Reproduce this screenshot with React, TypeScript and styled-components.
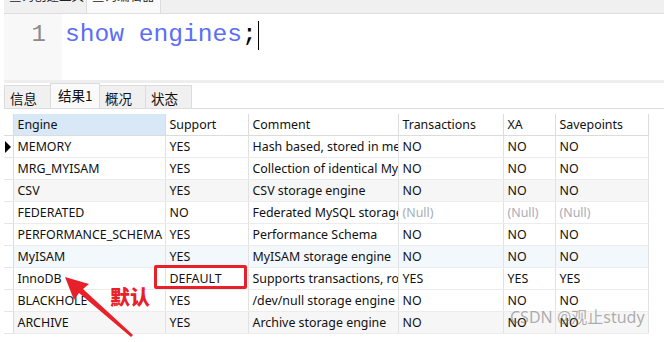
import styled, { createGlobalStyle } from "styled-components";

const GlobalStyle = createGlobalStyle`
  html, body {
    margin: 0;
    padding: 0;
    background: #ffffff;
  }
  body {
    width: 664px;
    height: 342px;
    overflow: hidden;
    font-family: "Noto Sans", "Noto Sans CJK SC", sans-serif;
  }
`;

type Tone = "plain" | "gray" | "blue";

type Row = {
  engine: string;
  support: string;
  comment: string;
  tx: string | null;
  xa: string | null;
  sp: string | null;
  tone: Tone;
};

const rows: Row[] = [
  { engine: "MEMORY", support: "YES", comment: "Hash based, stored in memory, useful for temporary tables", tx: "NO", xa: "NO", sp: "NO", tone: "plain" },
  { engine: "MRG_MYISAM", support: "YES", comment: "Collection of identical MyISAM tables", tx: "NO", xa: "NO", sp: "NO", tone: "plain" },
  { engine: "CSV", support: "YES", comment: "CSV storage engine", tx: "NO", xa: "NO", sp: "NO", tone: "gray" },
  { engine: "FEDERATED", support: "NO", comment: "Federated MySQL storage engine", tx: null, xa: null, sp: null, tone: "plain" },
  { engine: "PERFORMANCE_SCHEMA", support: "YES", comment: "Performance Schema", tx: "NO", xa: "NO", sp: "NO", tone: "plain" },
  { engine: "MyISAM", support: "YES", comment: "MyISAM storage engine", tx: "NO", xa: "NO", sp: "NO", tone: "blue" },
  { engine: "InnoDB", support: "DEFAULT", comment: "Supports transactions, row-level locking, and foreign keys", tx: "YES", xa: "YES", sp: "YES", tone: "plain" },
  { engine: "BLACKHOLE", support: "YES", comment: "/dev/null storage engine (anything you write to it disappears)", tx: "NO", xa: "NO", sp: "NO", tone: "plain" },
  { engine: "ARCHIVE", support: "YES", comment: "Archive storage engine", tx: "NO", xa: "NO", sp: "NO", tone: "gray" },
];

const columns = [
  { key: "engine", label: "Engine", width: 152 },
  { key: "support", label: "Support", width: 83 },
  { key: "comment", label: "Comment", width: 150 },
  { key: "tx", label: "Transactions", width: 105 },
  { key: "xa", label: "XA", width: 52 },
  { key: "sp", label: "Savepoints", width: 93 },
] as const;

const toneColor: Record<Tone, string> = {
  plain: "#ffffff",
  gray: "#f6f6f6",
  blue: "#f3f8fd",
};

export default function App() {
  return (
    <>
      <GlobalStyle />
      <Page>
        <TopStrip>
          <TopTab>查询创建工具</TopTab>
          <TopTab $active>查询编辑器</TopTab>
        </TopStrip>

        <Editor>
          <Gutter>1</Gutter>
          <Code>
            <Keyword>show engines</Keyword>
            <Semi>;</Semi>
            <Caret />
          </Code>
        </Editor>

        <Splitter />

        <TabBar>
          <ResultTab>信息</ResultTab>
          <ResultTab $active>结果1</ResultTab>
          <ResultTab>概况</ResultTab>
          <ResultTab>状态</ResultTab>
        </TabBar>

        <Grid>
          <Table>
            <colgroup>
              <col style={{ width: 9 }} />
              {columns.map((c) => (
                <col key={c.key} style={{ width: c.width }} />
              ))}
            </colgroup>
            <thead>
              <tr>
                <HeadCell />
                {columns.map((c) => (
                  <HeadCell key={c.key} $selected={c.key === "engine"}>
                    {c.label}
                  </HeadCell>
                ))}
              </tr>
            </thead>
            <tbody>
              {rows.map((r, i) => (
                <BodyRow key={r.engine} $tone={r.tone}>
                  <Pointer>{i === 0 ? <Triangle /> : null}</Pointer>
                  <Cell>{r.engine}</Cell>
                  <Cell>{r.support}</Cell>
                  <Cell>{r.comment}</Cell>
                  <Cell $null={r.tx === null}>{r.tx ?? "(Null)"}</Cell>
                  <Cell $null={r.xa === null}>{r.xa ?? "(Null)"}</Cell>
                  <Cell $null={r.sp === null}>{r.sp ?? "(Null)"}</Cell>
                </BodyRow>
              ))}
            </tbody>
          </Table>

          <Annotation>
            <HighlightBox />
            <Arrow viewBox="0 0 664 342" width="664" height="342">
              <polygon
                points="65,277 89,284 83,289 133,335 131,337 79,293 74,300"
                fill="#e8202a"
              />
            </Arrow>
            <Label>默认</Label>
            <Watermark>CSDN @观止study</Watermark>
          </Annotation>
        </Grid>
      </Page>
    </>
  );
}

const Page = styled.div`
  display: flex;
  flex-direction: column;
  width: 664px;
  height: 342px;
  padding-left: 4px;
  box-sizing: border-box;
`;

const TopStrip = styled.div`
  display: flex;
  height: 13px;
  background: #f0f0f0;
  border-bottom: 1px solid #dedede;
  overflow: hidden;
`;

const TopTab = styled.div<{ $active?: boolean }>`
  width: ${({ $active }) => ($active ? 74 : 83)}px;
  box-sizing: border-box;
  padding-left: 5px;
  margin-top: -14px;
  height: 27px;
  font-family: "Noto Sans CJK SC", sans-serif;
  font-size: 12.5px;
  line-height: 19px;
  white-space: nowrap;
  overflow: hidden;
  color: #222;
  background: ${({ $active }) => ($active ? "#fafafa" : "#f0f0f0")};
  border-right: 1px solid #dcdcdc;
`;

const Editor = styled.div`
  display: flex;
  height: 66px;
  background: #ffffff;
`;

const Gutter = styled.div`
  width: 58px;
  box-sizing: border-box;
  background: #f8f8f8;
  padding: 5px 16px 0 0;
  text-align: right;
  font-family: "Liberation Mono", monospace;
  font-size: 24px;
  line-height: 32px;
  color: #8c8c8c;
`;

const Code = styled.div`
  display: flex;
  align-items: flex-start;
  padding: 5px 0 0 3px;
  font-family: "Liberation Mono", monospace;
  font-size: 24.6px;
  line-height: 32px;
`;

const Keyword = styled.span`
  color: #5c6ef6;
  white-space: pre;
`;

const Semi = styled.span`
  color: #000000;
`;

const Caret = styled.span`
  display: block;
  width: 1px;
  height: 29px;
  margin: 2px 0 0 1px;
  background: #000000;
`;

const Splitter = styled.div`
  height: 3px;
  background: #eeeeee;
`;

const TabBar = styled.div`
  display: flex;
  align-items: flex-end;
  height: 25px;
  border-bottom: 1px solid #dcdcdc;
  margin-bottom: 5px;
`;

const ResultTab = styled.div<{ $active?: boolean }>`
  box-sizing: border-box;
  width: ${({ $active }) => ($active ? 50 : 47)}px;
  height: ${({ $active }) => ($active ? 25 : 23)}px;
  padding-left: ${({ $active }) => ($active ? 7 : 5)}px;
  font-family: "Noto Sans CJK SC", sans-serif;
  font-size: 13.5px;
  line-height: ${({ $active }) => ($active ? 22 : 24)}px;
  color: #111;
  background: ${({ $active }) => ($active ? "#fafafa" : "#f0f0f0")};
  border: 1px solid #dcdcdc;
  border-bottom: none;
  margin-right: -1px;
`;

const Grid = styled.div`
  position: relative;
  flex: 1;
`;

const Table = styled.table`
  table-layout: fixed;
  border-collapse: collapse;
  width: 644px;
  font-size: 12.4px;
  color: #111;
`;

const HeadCell = styled.th<{ $selected?: boolean }>`
  height: 21px;
  padding: 0 0 0 4px;
  text-align: left;
  font-weight: normal;
  white-space: nowrap;
  overflow: hidden;
  background: ${({ $selected }) => ($selected ? "#d9e8f7" : "#ffffff")};
  border-right: 1px solid #dcdcdc;
  border-bottom: 1px solid #dcdcdc;
  &:first-child {
    padding: 0;
  }
`;

const BodyRow = styled.tr<{ $tone: Tone }>`
  background: ${({ $tone }) => toneColor[$tone]};
`;

const Cell = styled.td<{ $null?: boolean }>`
  height: 21px;
  padding: 0 0 0 4px;
  white-space: nowrap;
  overflow: hidden;
  text-overflow: clip;
  color: ${({ $null }) => ($null ? "#a9acb8" : "#111111")};
  border-right: 1px solid #e2e2e2;
  border-bottom: 1px solid #ececec;
`;

const Pointer = styled.td`
  padding: 0;
  background: #ffffff;
  border-right: 1px solid #dcdcdc;
  border-bottom: 1px solid #e6e6e6;
  vertical-align: middle;
`;

const Triangle = styled.span`
  display: block;
  width: 0;
  height: 0;
  margin-left: 1px;
  border-top: 6px solid transparent;
  border-bottom: 6px solid transparent;
  border-left: 6px solid #000000;
`;

const Annotation = styled.div`
  position: absolute;
  inset: 0;
  pointer-events: none;
`;

const HighlightBox = styled.div`
  position: absolute;
  left: 150px;
  top: 151px;
  width: 93px;
  height: 24px;
  box-sizing: border-box;
  border: 3px solid #e8202a;
  border-radius: 2px;
`;

const Arrow = styled.svg`
  position: absolute;
  left: -4px;
  top: -114px;
`;

const Label = styled.span`
  position: absolute;
  left: 106px;
  top: 170px;
  font-family: "Noto Sans CJK SC", sans-serif;
  font-size: 20px;
  font-weight: 900;
  line-height: 26px;
  color: #e8202a;
`;

const Watermark = styled.span`
  position: absolute;
  left: 506px;
  top: 191px;
  font-family: "Noto Sans", "Noto Sans CJK SC", sans-serif;
  font-size: 16px;
  line-height: 24px;
  color: rgba(110, 110, 110, 0.55);
  white-space: nowrap;
`;
